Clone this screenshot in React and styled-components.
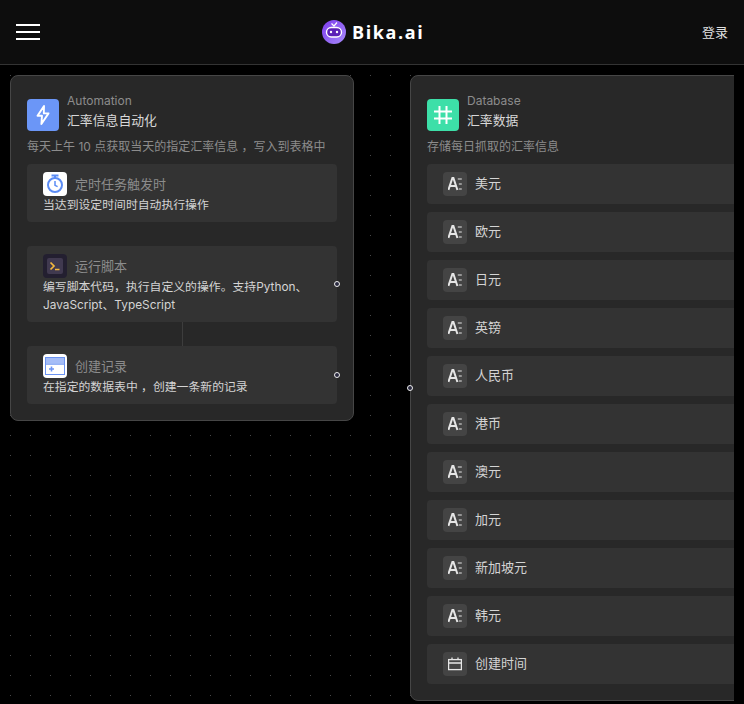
import React from 'react'
import styled, { createGlobalStyle } from 'styled-components'

const GlobalStyle = createGlobalStyle`
  html, body {
    margin: 0;
    padding: 0;
    background: #000;
    font-family: Inter, "Noto Sans CJK SC", sans-serif;
  }
  * { box-sizing: border-box; }
`

const Page = styled.div`
  width: 744px;
  height: 704px;
  overflow: hidden;
  display: flex;
  flex-direction: column;
`

const Header = styled.header`
  height: 65px;
  flex: none;
  background: #0d0d0d;
  border-bottom: 1px solid #333;
  display: flex;
  align-items: center;
  justify-content: space-between;
  padding: 0 16px;
  position: relative;
`

const Burger = styled.div`
  width: 24px;
  display: flex;
  flex-direction: column;
  gap: 5px;
  span {
    display: block;
    height: 2px;
    background: #fff;
  }
`

const Brand = styled.div`
  display: flex;
  align-items: center;
  gap: 6px;
  position: absolute;
  left: 322px;
  top: 20px;
`

const BrandName = styled.span`
  font-family: "Open Sans", sans-serif;
  font-size: 18px;
  line-height: 24px;
  font-weight: 700;
  letter-spacing: 1.6px;
  color: #fff;
`

const Login = styled.span`
  font-size: 13px;
  color: #e0e0e0;
  margin-bottom: 2px;
`

const Canvas = styled.main`
  flex: 1;
  position: relative;
  overflow: hidden;
  background-color: #000;
  background-image: radial-gradient(circle at 10.5px 10.5px, #484848 0, #484848 0.75px, transparent 0.76px);
  background-size: 20px 20px;
`

const Clip = styled.div`
  position: absolute;
  left: 0;
  top: 0;
  bottom: 0;
  width: 734px;
  overflow: hidden;
`

const Edge = styled.div`
  position: absolute;
  left: 734px;
  top: 0;
  bottom: 0;
  width: 10px;
  background: #000;
`

const Node = styled.section`
  position: absolute;
  left: ${p => p.$left}px;
  top: 10px;
  width: ${p => p.$width}px;
  background: #282828;
  border: 1px solid #464646;
  border-radius: 8px;
  padding: 23px 16px 16px;
`

const NodeHead = styled.div`
  display: flex;
  gap: 8px;
  height: 32px;
`

const NodeIcon = styled.div`
  width: 32px;
  height: 32px;
  border-radius: 4px;
  background: ${p => p.$bg};
  display: flex;
  align-items: center;
  justify-content: center;
  flex: none;
`

const NodeTitles = styled.div`
  display: flex;
  flex-direction: column;
  margin-top: -7px;
`

const NodeKind = styled.span`
  font-size: 12px;
  line-height: 18px;
  color: #8c8c8c;
`

const NodeName = styled.span`
  font-size: 12.85px;
  line-height: 22px;
  color: #d8d8d8;
`

const NodeDesc = styled.p`
  margin: 6px 0 0;
  font-size: 12px;
  line-height: 20px;
  color: #8c8c8c;
  white-space: nowrap;
`

const Steps = styled.div`
  display: flex;
  flex-direction: column;
  margin-top: 7px;
`

const Step = styled.div`
  position: relative;
  background: #333;
  border-radius: 4px;
  padding: 8px 16px;
  width: 310px;
  margin-top: ${p => p.$gap || 0}px;
`

const StepHead = styled.div`
  display: flex;
  align-items: center;
  gap: 8px;
  height: 24px;
`

const StepIcon = styled.div`
  width: 24px;
  height: 24px;
  border-radius: 4px;
  background: ${p => p.$bg};
  display: flex;
  align-items: center;
  justify-content: center;
  flex: none;
`

const StepTitle = styled.span`
  font-size: 13px;
  color: #8c8c8c;
  margin-bottom: 2px;
`

const StepText = styled.div`
  font-size: 11.85px;
  line-height: 18px;
  color: #d4d4d4;
`

const Connector = styled.div`
  width: 1px;
  height: 24px;
  background: #3d3d3d;
  margin-left: 155px;
`

const Port = styled.span`
  position: absolute;
  width: 6px;
  height: 6px;
  border-radius: 50%;
  border: 1px solid #eee;
  background: #2a2a40;
  z-index: 2;
`

const StepPort = styled(Port)`
  right: -3px;
  top: 50%;
  transform: translateY(-50%);
`

const TablePort = styled(Port)`
  left: 407px;
  top: 320px;
`

const Fields = styled.div`
  display: flex;
  flex-direction: column;
  gap: 8px;
  margin-top: 7px;
`

const Field = styled.div`
  height: 40px;
  background: #333;
  border-radius: 4px;
  display: flex;
  align-items: center;
  gap: 8px;
  padding: 0 16px;
`

const FieldIcon = styled.div`
  width: 24px;
  height: 24px;
  border-radius: 4px;
  background: #444;
  display: flex;
  align-items: center;
  justify-content: center;
  flex: none;
`

const FieldName = styled.span`
  font-size: 13px;
  color: #d4d4d4;
  margin-bottom: 3px;
`

const LogoIcon = () => (
  <svg width="24" height="24" viewBox="0 0 24 24">
    <defs>
      <linearGradient id="logoBg" x1="0" y1="0" x2="1" y2="1">
        <stop offset="0" stopColor="#7c3aed" />
        <stop offset="1" stopColor="#a78bfa" />
      </linearGradient>
    </defs>
    <circle cx="12" cy="12" r="12" fill="url(#logoBg)" />
    <path d="M9.5 3.5 L12 6 L15 2.5" fill="none" stroke="#fff" strokeWidth="1.2" />
    <rect x="4.5" y="7.5" width="15" height="9.5" rx="4.7" fill="#5b21b6" stroke="#fff" strokeWidth="1.4" />
    <circle cx="9" cy="12" r="1.2" fill="#fff" />
    <circle cx="15" cy="12" r="1.2" fill="#fff" />
  </svg>
)

const BoltIcon = () => (
  <svg width="16" height="20" viewBox="0 0 16 20" fill="none" stroke="#fff" strokeWidth="1.9" strokeLinejoin="round">
    <path d="M9 1 L2.5 10.8 H7 L6.4 19 L13.5 8.4 H8.8 Z" />
  </svg>
)

const HashIcon = () => (
  <svg width="20" height="20" viewBox="0 0 20 20" stroke="#fff" strokeWidth="2" fill="none">
    <path d="M1 6.5 H19 M1 13.5 H19 M6.5 1 V19 M13.5 1 V19" />
  </svg>
)

const TimerIcon = () => (
  <svg width="20" height="20" viewBox="0 0 20 20" fill="none" stroke="#5b8cf5" strokeWidth="2">
    <path d="M6.5 1.5 H13.5" />
    <path d="M10 2 V4" />
    <circle cx="10" cy="11" r="7" />
    <path d="M10 7 V11.3 L12.6 12.6" strokeWidth="1.5" />
  </svg>
)

const ScriptIcon = () => (
  <svg width="16" height="16" viewBox="0 0 16 16" fill="none">
    <rect width="16" height="16" rx="2" fill="#40394f" />
    <path d="M3.5 4.5 L7 8 L3.5 11.5" stroke="#f5b83d" strokeWidth="1.7" />
    <path d="M8 11.5 H12.5" stroke="#f5b83d" strokeWidth="1.5" />
  </svg>
)

const RecordIcon = () => (
  <svg width="20" height="18" viewBox="0 0 20 18" fill="none">
    <rect x="0.5" y="0.5" width="19" height="17" fill="#fff" stroke="#6b93f2" />
    <rect x="1" y="1" width="18" height="5.5" fill="#a5bdf7" />
    <rect x="1" y="6.5" width="18" height="1.2" fill="#6b93f2" />
    <path d="M4 12 H9 M6.5 9.5 V14.5" stroke="#6b93f2" strokeWidth="1.6" />
  </svg>
)

const TextFieldIcon = () => (
  <svg width="14" height="14" viewBox="0 0 14 14" fill="none" stroke="#e6e6e6">
    <path d="M0.4 13 L4.4 1 H5.4 L9.4 13 M2 9 H7.8" strokeWidth="2" />
    <path d="M9.8 2 H13.8 M10.8 7 H13.8 M10.8 12 H13.8" strokeWidth="1.2" />
  </svg>
)

const DateFieldIcon = () => (
  <svg width="14" height="14" viewBox="0 0 14 14" fill="none" stroke="#e6e6e6" strokeWidth="1.3">
    <rect x="0.6" y="2.6" width="12.8" height="10" />
    <path d="M0.6 6 H13.4 M4 0.5 V3 M10 0.5 V3" />
  </svg>
)

const fields = ['美元', '欧元', '日元', '英镑', '人民币', '港币', '澳元', '加元', '新加坡元', '韩元']

const App = () => {
  return (
    <Page>
      <GlobalStyle />
      <Header>
        <Burger><span /><span /><span /></Burger>
        <Brand>
          <LogoIcon />
          <BrandName>Bika.ai</BrandName>
        </Brand>
        <Login>登录</Login>
      </Header>
      <Canvas>
        <Clip>
          <Node $left={10} $width={344}>
            <NodeHead>
              <NodeIcon $bg="#6b96f7"><BoltIcon /></NodeIcon>
              <NodeTitles>
                <NodeKind>Automation</NodeKind>
                <NodeName>汇率信息自动化</NodeName>
              </NodeTitles>
            </NodeHead>
            <NodeDesc>每天上午 10 点获取当天的指定汇率信息 ，写入到表格中</NodeDesc>
            <Steps>
              <Step>
                <StepHead>
                  <StepIcon $bg="#fff"><TimerIcon /></StepIcon>
                  <StepTitle>定时任务触发时</StepTitle>
                </StepHead>
                <StepText>当达到设定时间时自动执行操作</StepText>
              </Step>
              <Step $gap={24}>
                <StepHead>
                  <StepIcon $bg="#231f30"><ScriptIcon /></StepIcon>
                  <StepTitle>运行脚本</StepTitle>
                </StepHead>
                <StepText>编写脚本代码，执行自定义的操作。支持Python、JavaScript、TypeScript</StepText>
                <StepPort />
              </Step>
              <Connector />
              <Step>
                <StepHead>
                  <StepIcon $bg="#fff"><RecordIcon /></StepIcon>
                  <StepTitle>创建记录</StepTitle>
                </StepHead>
                <StepText>在指定的数据表中 ，创建一条新的记录</StepText>
                <StepPort />
              </Step>
            </Steps>
          </Node>
          <Node $left={410} $width={420}>
            <NodeHead>
              <NodeIcon $bg="#3ddfa8"><HashIcon /></NodeIcon>
              <NodeTitles>
                <NodeKind>Database</NodeKind>
                <NodeName>汇率数据</NodeName>
              </NodeTitles>
            </NodeHead>
            <NodeDesc>存储每日抓取的汇率信息</NodeDesc>
            <Fields>
              {fields.map(name => (
                <Field key={name}>
                  <FieldIcon><TextFieldIcon /></FieldIcon>
                  <FieldName>{name}</FieldName>
                </Field>
              ))}
              <Field>
                <FieldIcon><DateFieldIcon /></FieldIcon>
                <FieldName>创建时间</FieldName>
              </Field>
            </Fields>
          </Node>
          <TablePort />
        </Clip>
        <Edge />
      </Canvas>
    </Page>
  )
}

export default App
